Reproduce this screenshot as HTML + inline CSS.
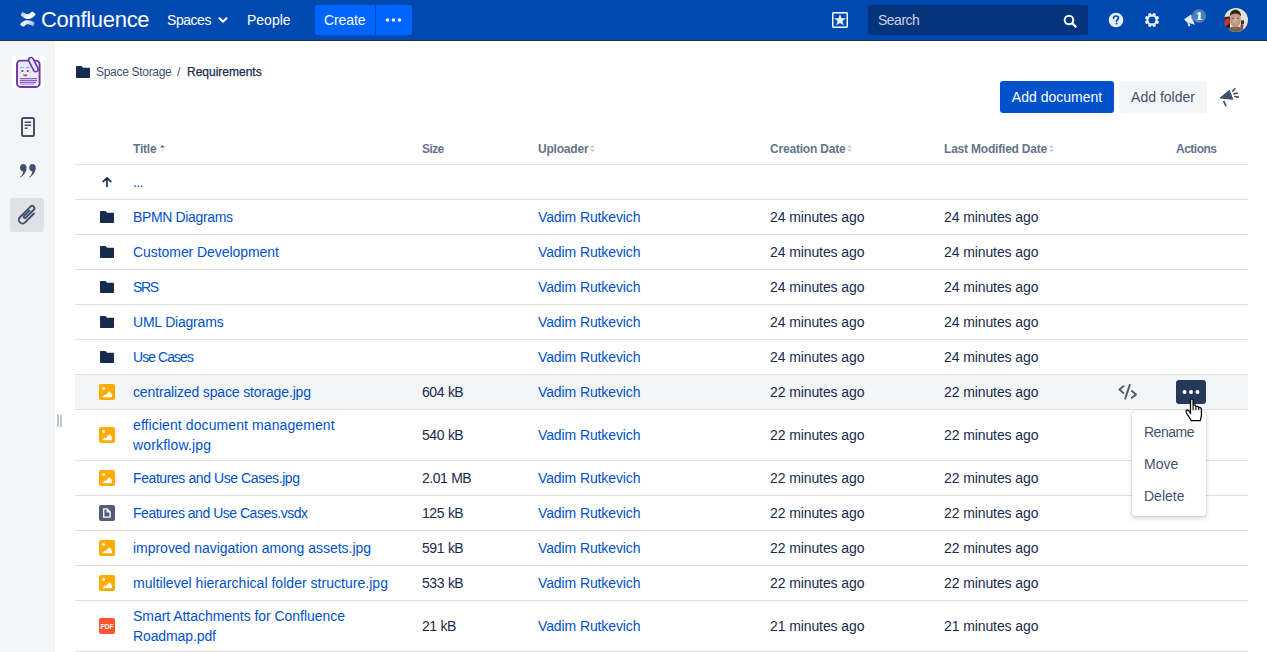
<!DOCTYPE html>
<html><head><meta charset="utf-8">
<style>
*{box-sizing:border-box;margin:0;padding:0}
html,body{width:1267px;height:652px;overflow:hidden;background:#fff;font-family:"Liberation Sans",sans-serif;color:#172B4D}
.abs{position:absolute}
svg.ic,svg.abs{position:absolute;display:block}
#hdr{position:absolute;left:0;top:0;width:1267px;height:41px;background:#0049B0;border-bottom:1px solid #1F3157}
.wt{position:absolute;color:#fff;font-size:14px;line-height:16px;white-space:nowrap}
#side{position:absolute;left:0;top:41px;width:55px;height:611px;background:#F4F5F7}
.rl{position:absolute;left:75px;width:1173px;height:1px;background:#DFE1E6}
.t{position:absolute;font-size:14px;line-height:20px;white-space:nowrap;color:#172B4D}
.lnk{color:#0052CC}
.hd{position:absolute;font-size:12px;line-height:14px;color:#66748B;font-weight:bold;top:142px;letter-spacing:-0.2px;white-space:nowrap}
.mi{position:absolute;left:1144px;font-size:14px;line-height:20px;color:#42526E;letter-spacing:-0.5px}
</style></head><body>
<div id="hdr">
  <svg class="abs" style="left:20px;top:11px" width="16" height="16" viewBox="0 0 16 16">
    <defs><linearGradient id="lg1" x1="0" y1="0" x2="1" y2="0.6"><stop offset="0" stop-color="#9DB6E0"/><stop offset="0.7" stop-color="#fff"/></linearGradient>
    <linearGradient id="lg2" x1="1" y1="0.6" x2="0" y2="0"><stop offset="0" stop-color="#9DB6E0"/><stop offset="0.7" stop-color="#fff"/></linearGradient></defs>
    <path d="M2.6 0.9C4.5 1.8 6 3 7.8 3C9.5 3 10.8 1.5 12 0.6C13.5 1.2 15 2.2 15.6 3.5C14 6 11 8 7.8 8C5 8 2.5 6 0.7 4.2C1 2.8 1.7 1.6 2.6 0.9Z" fill="url(#lg1)"/>
    <path d="M0 13.4C1.5 11 4.5 9.2 7.5 9.2C10.5 9.2 12.8 10.5 14.4 11.3C14.2 13 13.8 14.5 13.2 15.6C11.5 14.5 9.8 13.2 7.8 13.2C6.2 13.2 5 14.5 3.8 15.8C2.4 15.3 1 14.4 0 13.4Z" fill="url(#lg2)"/>
  </svg>
  <div class="wt" style="left:41px;top:8px;font-size:22px;line-height:23px;letter-spacing:-0.3px">Confluence</div>
  <div class="wt" style="left:167px;top:12px;letter-spacing:-0.45px">Spaces</div>
  <svg class="abs" style="left:218px;top:15px" width="10" height="10" viewBox="0 0 10 10"><path d="M1.5 3.2L5 6.7L8.5 3.2" fill="none" stroke="#fff" stroke-width="2" stroke-linecap="round" stroke-linejoin="round"/></svg>
  <div class="wt" style="left:247px;top:12px;letter-spacing:0px">People</div>
  <div class="abs" style="left:315px;top:5px;width:97px;height:30px;background:#0065FF;border-radius:3px"></div>
  <div class="abs" style="left:375px;top:5px;width:1px;height:30px;background:#0049B0;opacity:.9"></div>
  <div class="wt" style="left:324px;top:12px;letter-spacing:-0.1px">Create</div>
  <svg class="abs" style="left:385px;top:17px" width="17" height="6" viewBox="0 0 17 6"><circle cx="2.5" cy="3" r="1.8" fill="#fff"/><circle cx="8.5" cy="3" r="1.8" fill="#fff"/><circle cx="14.5" cy="3" r="1.8" fill="#fff"/></svg>
  <svg class="abs" style="left:832px;top:12px" width="16" height="16" viewBox="0 0 16 16"><rect x="0.75" y="0.75" width="14.5" height="14.5" rx="0.9" fill="none" stroke="#fff" stroke-width="1.5"/><path d="M8 1.9L9.53 6.2L14.09 6.32L10.47 9.1L11.76 13.48L8 10.9L4.24 13.48L5.53 9.1L1.91 6.32L6.47 6.2Z" fill="#E6EEFA"/></svg>
  <div class="abs" style="left:868px;top:5px;width:220px;height:30px;background:#04347B;border-radius:3px"></div>
  <div class="wt" style="left:878px;top:12px;color:#C7D1E3;letter-spacing:-0.5px">Search</div>
  <svg class="abs" style="left:1062px;top:13px" width="16" height="16" viewBox="0 0 16 16"><circle cx="7" cy="7" r="4.3" fill="none" stroke="#fff" stroke-width="2"/><path d="M10.2 10.2L13.6 13.6" stroke="#fff" stroke-width="2.2" stroke-linecap="round"/></svg>
  <svg class="abs" style="left:1108px;top:12px" width="16" height="16" viewBox="0 0 16 16"><circle cx="8" cy="8" r="7.3" fill="#E6EEFA"/><path d="M5.6 6.2C5.6 4.8 6.7 4 8 4C9.4 4 10.4 4.8 10.4 6C10.4 7.6 8.5 7.6 8.5 9.2" fill="none" stroke="#0049B0" stroke-width="1.7" stroke-linecap="round"/><circle cx="8.5" cy="11.6" r="1" fill="#0049B0"/></svg>
  <svg class="abs" style="left:1144px;top:12px" width="16" height="16" viewBox="0 0 16 16"><g fill="#E6EEFA"><rect x="6.5" y="0.9" width="3" height="3.4" rx=".5" transform="rotate(22.5 8 8)"/><rect x="6.5" y="0.9" width="3" height="3.4" rx=".5" transform="rotate(67.5 8 8)"/><rect x="6.5" y="0.9" width="3" height="3.4" rx=".5" transform="rotate(112.5 8 8)"/><rect x="6.5" y="0.9" width="3" height="3.4" rx=".5" transform="rotate(157.5 8 8)"/><rect x="6.5" y="0.9" width="3" height="3.4" rx=".5" transform="rotate(202.5 8 8)"/><rect x="6.5" y="0.9" width="3" height="3.4" rx=".5" transform="rotate(247.5 8 8)"/><rect x="6.5" y="0.9" width="3" height="3.4" rx=".5" transform="rotate(292.5 8 8)"/><rect x="6.5" y="0.9" width="3" height="3.4" rx=".5" transform="rotate(337.5 8 8)"/></g><circle cx="8" cy="8" r="4.65" fill="none" stroke="#E6EEFA" stroke-width="2.1"/></svg>
  <svg class="abs" style="left:1183px;top:12px" width="14" height="16" viewBox="0 0 14 16"><path d="M1 7.2L8.5 2.2L11.8 12.8L4.2 10.6Z" fill="#E6EEFA"/><path d="M4.5 10.8L5.6 14.4L7.4 13.8L6.6 11.4Z" fill="#E6EEFA"/></svg>
  <div class="abs" style="left:1192px;top:9px;width:14px;height:14px;border-radius:50%;background:#4580C2;box-shadow:0 0 0 1px rgba(30,60,120,.45)"></div><div class="abs" style="left:1192px;top:9px;width:14px;height:14px;color:#fff;font-family:'Liberation Serif',serif;font-weight:bold;font-size:12px;line-height:14px;text-align:center;transform:scaleX(1.35)">1</div>
  <svg class="abs" style="left:1224px;top:8px" width="24" height="24" viewBox="0 0 24 24">
    <defs><clipPath id="av"><circle cx="12" cy="12" r="12"/></clipPath>
    <radialGradient id="face" cx="0.5" cy="0.5" r="0.55"><stop offset="0" stop-color="#D5B0A0"/><stop offset="1" stop-color="#B58C78"/></radialGradient></defs>
    <g clip-path="url(#av)">
      <rect width="24" height="24" fill="#E4E0DA"/>
      <path d="M0 9L6 8.5V22H0Z" fill="#2A2424"/>
      <path d="M0.5 11.5L5.5 10L6 15L2 18L0.5 17Z" fill="#C8333A"/>
      <path d="M17 12.5L20 12.2L20 16L17 17Z" fill="#3A3030"/>
      <path d="M16.5 17L19.5 16.5L19 21L16.5 21Z" fill="#B23438"/>
      <path d="M2 24C3 20 7 18.6 11.5 18.6C16 18.6 19.5 20 21 24Z" fill="#6E6B4E"/>
      <ellipse cx="11.4" cy="11.8" rx="5.4" ry="7.4" fill="url(#face)"/>
      <path d="M5.8 8.6C5.6 4 8.2 1.8 11.4 1.8C14.6 1.8 17.2 4 17 8.6C15.8 6.2 14 5.4 11.4 5.4C8.8 5.4 7 6.2 5.8 8.6Z" fill="#2E2520"/>
      <path d="M8.3 10.3H10M12.8 10.3H14.5" stroke="#5A4036" stroke-width=".9"/>
    </g>
  </svg>
</div>

<div id="side"></div>
<svg class="abs" style="left:12px;top:56px" width="32" height="32" viewBox="0 0 32 32">
  <rect width="32" height="32" fill="#fff"/>
  <rect x="5" y="4.6" width="22.6" height="26.4" rx="3.6" fill="#E6EAFA" stroke="#6F36A6" stroke-width="1.9"/>
  <rect x="-2.4" y="-7.6" width="4.8" height="15.2" rx="2.4" transform="translate(21.4 8.6) rotate(-27)" fill="#E6EAFA" stroke="#6F36A6" stroke-width="1.6"/>
  <path d="M8.6 11.4H11.6M14.4 11.4H17.4" stroke="#A08CC8" stroke-width="1"/>
  <circle cx="10.4" cy="15" r="1.1" fill="#3A4BB0"/><circle cx="15.8" cy="15" r="1.1" fill="#3A4BB0"/>
  <circle cx="8.2" cy="16.4" r=".7" fill="#F3B3B8"/><circle cx="18.2" cy="16.4" r=".7" fill="#F3B3B8"/>
  <path d="M11.2 18.4H15.4C15.4 19.6 14.4 20.4 13.3 20.4C12.2 20.4 11.2 19.6 11.2 18.4Z" fill="#D8383F"/>
  <path d="M8 22.6H25M8 24.6H25M8 26.6H24" stroke="#8E5CC0" stroke-width="1.05"/>
  <path d="M8 28.4H22" stroke="#B497D6" stroke-width="0.9"/>
</svg>
<svg class="abs" style="left:20px;top:116px" width="16" height="22" viewBox="0 0 16 22"><rect x="2" y="2" width="12" height="18" rx="1.6" fill="none" stroke="#42526E" stroke-width="2"/><path d="M4.6 6.2H11.2M4.6 9.2H11.2M4.6 12.2H7.6" stroke="#42526E" stroke-width="1.5"/></svg>
<svg class="abs" style="left:19px;top:162px" width="18" height="18" viewBox="0 0 18 18"><path d="M4.2 2C6.2 2 7.6 3.4 7.6 5.6C7.6 9.8 4.6 13.8 1.4 15.6L0.9 15C2.8 13.5 4 11.6 4.1 9.4C2.3 9.2 1 7.8 1 5.7C1 3.6 2.4 2 4.2 2ZM13.4 2C15.4 2 16.8 3.4 16.8 5.6C16.8 9.8 13.8 13.8 10.6 15.6L10.1 15C12 13.5 13.2 11.6 13.3 9.4C11.5 9.2 10.2 7.8 10.2 5.7C10.2 3.6 11.6 2 13.4 2Z" fill="#42526E"/></svg>
<div class="abs" style="left:10px;top:198px;width:34px;height:34px;background:#DFE1E6;border-radius:3px"></div>
<svg class="abs" style="left:10px;top:198px" width="34" height="34" viewBox="0 0 34 34"><path transform="translate(-10 -198) matrix(0.7071 -0.7071 0.7071 0.7071 0 0)" d="M-127 175L-139.5 175A3.65 3.65 0 0 1 -139.5 167.7L-124.5 167.7A2.25 2.25 0 0 1 -124.5 172.2L-135.8 172.2A1.2 1.2 0 0 1 -135.8 169.8L-128.1 169.8" fill="none" stroke="#42526E" stroke-width="1.9" stroke-linecap="round"/></svg>
<div class="abs" style="left:57px;top:415px;width:2px;height:12px;background:#C1C7D0"></div>
<div class="abs" style="left:60px;top:415px;width:2px;height:12px;background:#C1C7D0"></div>

<svg class="abs" style="left:76px;top:66px" width="14" height="12" viewBox="0 0 14 12"><path d="M0 1C0 .4.4 0 1 0H5.6L7 1.8H13C13.6 1.8 14 2.2 14 2.8V11C14 11.6 13.6 12 13 12H1C.4 12 0 11.6 0 11Z" fill="#172B4D"/></svg>
<div class="t" style="left:96px;top:62px;font-size:12px;color:#42526E;letter-spacing:-0.3px">Space Storage</div>
<div class="t" style="left:177px;top:62px;font-size:12px;color:#42526E">/</div>
<div class="t" style="left:187px;top:62px;font-size:12px;color:#172B4D;-webkit-text-stroke:0.25px #172B4D">Requirements</div>

<div class="abs" style="left:1000px;top:81px;width:114px;height:32px;background:#0052CC;border-radius:3px;color:#fff;font-size:14px;line-height:32px;text-align:center">Add document</div>
<div class="abs" style="left:1119px;top:81px;width:88px;height:32px;background:#F4F5F7;border-radius:3px;color:#42526E;font-size:14px;line-height:32px;text-align:center">Add folder</div>
<svg class="abs" style="left:1219px;top:86px" width="22" height="22" viewBox="0 0 22 22"><path d="M1.4 12L10.3 4.6L13.6 13.2Z" fill="#42526E" stroke="#42526E" stroke-width="1.2" stroke-linejoin="round"/><path d="M4.9 15.6L6.8 19.6M13.7 5.2L15.8 2.7M15.2 7.9L18.3 7M15.9 10.5L19.2 11.2" stroke="#42526E" stroke-width="1.7" stroke-linecap="round"/></svg>

<div class="hd" style="left:133px">Title</div>
<svg class="abs" style="left:159px;top:144px" width="7" height="9" viewBox="0 0 7 9"><path d="M1 3.6L3.5 1L6 3.6Z" fill="#5E6C84"/><path d="M1 5.4L3.5 8L6 5.4Z" fill="#DFE1E6"/></svg>
<div class="hd" style="left:422px;letter-spacing:-0.6px">Size</div>
<div class="hd" style="left:538px">Uploader</div>
<svg class="abs" style="left:589px;top:144px" width="7" height="9" viewBox="0 0 7 9"><path d="M1 3.6L3.5 1L6 3.6Z" fill="#C1C7D0"/><path d="M1 5.4L3.5 8L6 5.4Z" fill="#C1C7D0"/></svg>
<div class="hd" style="left:770px">Creation Date</div>
<svg class="abs" style="left:846px;top:144px" width="7" height="9" viewBox="0 0 7 9"><path d="M1 3.6L3.5 1L6 3.6Z" fill="#C1C7D0"/><path d="M1 5.4L3.5 8L6 5.4Z" fill="#C1C7D0"/></svg>
<div class="hd" style="left:944px">Last Modified Date</div>
<svg class="abs" style="left:1048px;top:144px" width="7" height="9" viewBox="0 0 7 9"><path d="M1 3.6L3.5 1L6 3.6Z" fill="#C1C7D0"/><path d="M1 5.4L3.5 8L6 5.4Z" fill="#C1C7D0"/></svg>
<div class="hd" style="left:1176px;letter-spacing:-0.5px">Actions</div>
<div class="rl" style="top:164px"></div>

<div class="rl" style="top:199px"></div>
<svg class="ic" style="left:100px;top:175px" width="14" height="14" viewBox="0 0 14 14"><path d="M7 11.3V3M3.2 6.6L7 2.8L10.8 6.6" fill="none" stroke="#172B4D" stroke-width="1.7" stroke-linecap="round" stroke-linejoin="round"/></svg>
<div class="t lnk" style="left:133px;top:172px;letter-spacing:-0.600px;">...</div>
<div class="rl" style="top:234px"></div>
<svg class="ic" style="left:100px;top:211px" width="14" height="12" viewBox="0 0 14 12"><path d="M0 1C0 .4.4 0 1 0H5.6L7 1.8H13C13.6 1.8 14 2.2 14 2.8V11C14 11.6 13.6 12 13 12H1C.4 12 0 11.6 0 11Z" fill="#172B4D"/></svg>
<div class="t lnk" style="left:133px;top:207px;letter-spacing:-0.350px;">BPMN Diagrams</div>
<div class="t lnk" style="left:538px;top:207px;letter-spacing:-0.107px;">Vadim Rutkevich</div>
<div class="t" style="left:770px;top:207px;letter-spacing:-0.100px;">24 minutes ago</div>
<div class="t" style="left:944px;top:207px;letter-spacing:-0.100px;">24 minutes ago</div>
<div class="rl" style="top:269px"></div>
<svg class="ic" style="left:100px;top:246px" width="14" height="12" viewBox="0 0 14 12"><path d="M0 1C0 .4.4 0 1 0H5.6L7 1.8H13C13.6 1.8 14 2.2 14 2.8V11C14 11.6 13.6 12 13 12H1C.4 12 0 11.6 0 11Z" fill="#172B4D"/></svg>
<div class="t lnk" style="left:133px;top:242px;letter-spacing:-0.058px;">Customer Development</div>
<div class="t lnk" style="left:538px;top:242px;letter-spacing:-0.107px;">Vadim Rutkevich</div>
<div class="t" style="left:770px;top:242px;letter-spacing:-0.100px;">24 minutes ago</div>
<div class="t" style="left:944px;top:242px;letter-spacing:-0.100px;">24 minutes ago</div>
<div class="rl" style="top:304px"></div>
<svg class="ic" style="left:100px;top:281px" width="14" height="12" viewBox="0 0 14 12"><path d="M0 1C0 .4.4 0 1 0H5.6L7 1.8H13C13.6 1.8 14 2.2 14 2.8V11C14 11.6 13.6 12 13 12H1C.4 12 0 11.6 0 11Z" fill="#172B4D"/></svg>
<div class="t lnk" style="left:133px;top:277px;letter-spacing:-1.400px;">SRS</div>
<div class="t lnk" style="left:538px;top:277px;letter-spacing:-0.107px;">Vadim Rutkevich</div>
<div class="t" style="left:770px;top:277px;letter-spacing:-0.100px;">24 minutes ago</div>
<div class="t" style="left:944px;top:277px;letter-spacing:-0.100px;">24 minutes ago</div>
<div class="rl" style="top:339px"></div>
<svg class="ic" style="left:100px;top:316px" width="14" height="12" viewBox="0 0 14 12"><path d="M0 1C0 .4.4 0 1 0H5.6L7 1.8H13C13.6 1.8 14 2.2 14 2.8V11C14 11.6 13.6 12 13 12H1C.4 12 0 11.6 0 11Z" fill="#172B4D"/></svg>
<div class="t lnk" style="left:133px;top:312px;letter-spacing:-0.200px;">UML Diagrams</div>
<div class="t lnk" style="left:538px;top:312px;letter-spacing:-0.107px;">Vadim Rutkevich</div>
<div class="t" style="left:770px;top:312px;letter-spacing:-0.100px;">24 minutes ago</div>
<div class="t" style="left:944px;top:312px;letter-spacing:-0.100px;">24 minutes ago</div>
<div class="rl" style="top:374px"></div>
<svg class="ic" style="left:100px;top:351px" width="14" height="12" viewBox="0 0 14 12"><path d="M0 1C0 .4.4 0 1 0H5.6L7 1.8H13C13.6 1.8 14 2.2 14 2.8V11C14 11.6 13.6 12 13 12H1C.4 12 0 11.6 0 11Z" fill="#172B4D"/></svg>
<div class="t lnk" style="left:133px;top:347px;letter-spacing:-0.938px;">Use Cases</div>
<div class="t lnk" style="left:538px;top:347px;letter-spacing:-0.107px;">Vadim Rutkevich</div>
<div class="t" style="left:770px;top:347px;letter-spacing:-0.100px;">24 minutes ago</div>
<div class="t" style="left:944px;top:347px;letter-spacing:-0.100px;">24 minutes ago</div>
<div class="abs" style="left:75px;top:375px;width:1173px;height:34px;background:#F4F5F7"></div>
<div class="rl" style="top:409px"></div>
<svg class="ic" style="left:99px;top:384px" width="16" height="16" viewBox="0 0 16 16"><rect width="16" height="16" rx="2" fill="#FFAB00"/><circle cx="4.6" cy="4.6" r="1.5" fill="#fff"/><path d="M3 13.2L5.6 10.6L6.6 11.3L10.4 7.2L12.8 10V13.2Z" fill="#fff"/></svg>
<div class="t lnk" style="left:133px;top:382px;letter-spacing:-0.146px;">centralized space storage.jpg</div>
<div class="t" style="left:422px;top:382px"><span style="letter-spacing:-0.45px">604</span> <span style="letter-spacing:-0.7px">kB</span></div>
<div class="t lnk" style="left:538px;top:382px;letter-spacing:-0.107px;">Vadim Rutkevich</div>
<div class="t" style="left:770px;top:382px;letter-spacing:-0.100px;">22 minutes ago</div>
<div class="t" style="left:944px;top:382px;letter-spacing:-0.100px;">22 minutes ago</div>
<div class="rl" style="top:460px"></div>
<svg class="ic" style="left:99px;top:427px" width="16" height="16" viewBox="0 0 16 16"><rect width="16" height="16" rx="2" fill="#FFAB00"/><circle cx="4.6" cy="4.6" r="1.5" fill="#fff"/><path d="M3 13.2L5.6 10.6L6.6 11.3L10.4 7.2L12.8 10V13.2Z" fill="#fff"/></svg>
<div class="t lnk" style="left:133px;top:415px;letter-spacing:0.093px;">efficient document management</div>
<div class="t lnk" style="left:133px;top:435px;letter-spacing:0.155px;">workflow.jpg</div>
<div class="t" style="left:422px;top:425px"><span style="letter-spacing:-0.45px">540</span> <span style="letter-spacing:-0.7px">kB</span></div>
<div class="t lnk" style="left:538px;top:425px;letter-spacing:-0.107px;">Vadim Rutkevich</div>
<div class="t" style="left:770px;top:425px;letter-spacing:-0.100px;">22 minutes ago</div>
<div class="t" style="left:944px;top:425px;letter-spacing:-0.100px;">22 minutes ago</div>
<div class="rl" style="top:495px"></div>
<svg class="ic" style="left:99px;top:470px" width="16" height="16" viewBox="0 0 16 16"><rect width="16" height="16" rx="2" fill="#FFAB00"/><circle cx="4.6" cy="4.6" r="1.5" fill="#fff"/><path d="M3 13.2L5.6 10.6L6.6 11.3L10.4 7.2L12.8 10V13.2Z" fill="#fff"/></svg>
<div class="t lnk" style="left:133px;top:468px;letter-spacing:-0.416px;">Features and Use Cases.jpg</div>
<div class="t" style="left:422px;top:468px"><span style="letter-spacing:-0.45px">2.01</span> <span style="letter-spacing:-0.7px">MB</span></div>
<div class="t lnk" style="left:538px;top:468px;letter-spacing:-0.107px;">Vadim Rutkevich</div>
<div class="t" style="left:770px;top:468px;letter-spacing:-0.100px;">22 minutes ago</div>
<div class="t" style="left:944px;top:468px;letter-spacing:-0.100px;">22 minutes ago</div>
<div class="rl" style="top:530px"></div>
<svg class="ic" style="left:99px;top:505px" width="16" height="16" viewBox="0 0 16 16"><rect width="16" height="16" rx="2" fill="#505F79"/><path d="M4 3.2H8.3L11.8 6.7V12.8H4Z" fill="#fff"/><path d="M5.4 4.6H7.6V7.4H10.4V11.4H5.4Z" fill="#505F79"/></svg>
<div class="t lnk" style="left:133px;top:503px;letter-spacing:-0.481px;">Features and Use Cases.vsdx</div>
<div class="t" style="left:422px;top:503px"><span style="letter-spacing:-0.45px">125</span> <span style="letter-spacing:-0.7px">kB</span></div>
<div class="t lnk" style="left:538px;top:503px;letter-spacing:-0.107px;">Vadim Rutkevich</div>
<div class="t" style="left:770px;top:503px;letter-spacing:-0.100px;">22 minutes ago</div>
<div class="t" style="left:944px;top:503px;letter-spacing:-0.100px;">22 minutes ago</div>
<div class="rl" style="top:565px"></div>
<svg class="ic" style="left:99px;top:540px" width="16" height="16" viewBox="0 0 16 16"><rect width="16" height="16" rx="2" fill="#FFAB00"/><circle cx="4.6" cy="4.6" r="1.5" fill="#fff"/><path d="M3 13.2L5.6 10.6L6.6 11.3L10.4 7.2L12.8 10V13.2Z" fill="#fff"/></svg>
<div class="t lnk" style="left:133px;top:538px;letter-spacing:-0.026px;">improved navigation among assets.jpg</div>
<div class="t" style="left:422px;top:538px"><span style="letter-spacing:-0.45px">591</span> <span style="letter-spacing:-0.7px">kB</span></div>
<div class="t lnk" style="left:538px;top:538px;letter-spacing:-0.107px;">Vadim Rutkevich</div>
<div class="t" style="left:770px;top:538px;letter-spacing:-0.100px;">22 minutes ago</div>
<div class="t" style="left:944px;top:538px;letter-spacing:-0.100px;">22 minutes ago</div>
<div class="rl" style="top:600px"></div>
<svg class="ic" style="left:99px;top:575px" width="16" height="16" viewBox="0 0 16 16"><rect width="16" height="16" rx="2" fill="#FFAB00"/><circle cx="4.6" cy="4.6" r="1.5" fill="#fff"/><path d="M3 13.2L5.6 10.6L6.6 11.3L10.4 7.2L12.8 10V13.2Z" fill="#fff"/></svg>
<div class="t lnk" style="left:133px;top:573px;letter-spacing:0.030px;">multilevel hierarchical folder structure.jpg</div>
<div class="t" style="left:422px;top:573px"><span style="letter-spacing:-0.45px">533</span> <span style="letter-spacing:-0.7px">kB</span></div>
<div class="t lnk" style="left:538px;top:573px;letter-spacing:-0.107px;">Vadim Rutkevich</div>
<div class="t" style="left:770px;top:573px;letter-spacing:-0.100px;">22 minutes ago</div>
<div class="t" style="left:944px;top:573px;letter-spacing:-0.100px;">22 minutes ago</div>
<div class="rl" style="top:651px"></div>
<svg class="ic" style="left:99px;top:618px" width="16" height="16" viewBox="0 0 16 16"><rect width="16" height="16" rx="2" fill="#FF5630"/><text x="8" y="10.8" text-anchor="middle" font-family="Liberation Sans" font-weight="bold" font-size="6.6" fill="#fff">PDF</text></svg>
<div class="t lnk" style="left:133px;top:606px;letter-spacing:-0.039px;">Smart Attachments for Confluence</div>
<div class="t lnk" style="left:133px;top:626px;letter-spacing:-0.110px;">Roadmap.pdf</div>
<div class="t" style="left:422px;top:616px"><span style="letter-spacing:-0.45px">21</span> <span style="letter-spacing:-0.7px">kB</span></div>
<div class="t lnk" style="left:538px;top:616px;letter-spacing:-0.107px;">Vadim Rutkevich</div>
<div class="t" style="left:770px;top:616px;letter-spacing:-0.100px;">21 minutes ago</div>
<div class="t" style="left:944px;top:616px;letter-spacing:-0.100px;">21 minutes ago</div>

<svg class="abs" style="left:1118px;top:384px" width="20" height="16" viewBox="0 0 20 16"><path d="M5.6 2.2L1.5 5.6L5.4 9M13.9 7L18 10.4L13.9 13.8M11.8 0.9L7.2 14.6" fill="none" stroke="#4A5A75" stroke-width="1.9" stroke-linecap="round" stroke-linejoin="round"/></svg>
<div class="abs" style="left:1176px;top:380px;width:30px;height:24px;background:#253858;border-radius:3px"></div>
<svg class="abs" style="left:1182px;top:389px" width="18" height="6" viewBox="0 0 18 6"><circle cx="2.5" cy="3" r="2" fill="#fff"/><circle cx="9" cy="3" r="2" fill="#fff"/><circle cx="15.5" cy="3" r="2" fill="#fff"/></svg>

<div class="abs" style="left:1132px;top:411px;width:74px;height:105px;background:#fff;border-radius:3px;box-shadow:0 2px 4px rgba(9,30,66,0.22),0 0 1px rgba(9,30,66,0.3)"></div>
<div class="mi" style="top:422px">Rename</div>
<div class="mi" style="top:454px;letter-spacing:0">Move</div>
<div class="mi" style="top:486px;letter-spacing:0">Delete</div>

<svg class="abs" style="left:1183px;top:397px" width="22" height="26" viewBox="0 0 22 26"><path d="M7.5 3.2Q7.5 1.8 8.8 1.8Q10.1 1.8 10.1 3.2V8.6Q10.3 7.9 11.5 7.9Q12.7 7.9 12.9 9V9.9Q13.1 9.3 14.3 9.3Q15.5 9.3 15.7 10.5V11Q15.9 10.6 17 10.6Q18.4 10.6 18.4 12V18.8L17.2 23.6H8.2L3.4 15.8Q2.5 14.2 3.4 13.3Q4.5 12.5 5.6 13.7L7.5 16.2Z" fill="#fff" stroke="#000" stroke-width="1.25" stroke-linejoin="miter"/><path d="M10.1 8.6V13.2M12.9 9.9V13.2M15.7 11V13.2" stroke="#000" stroke-width="1.1"/></svg>
</body></html>
